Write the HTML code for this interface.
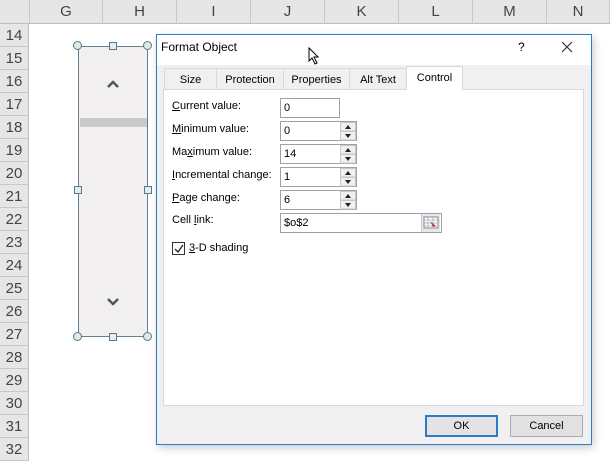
<!DOCTYPE html>
<html><head><style>
*{margin:0;padding:0;box-sizing:border-box}
body{width:610px;height:457px;overflow:hidden;background:#fff;font-family:"Liberation Sans",sans-serif;position:relative}
.a{position:absolute}
.ch{top:0;height:24px;background:#e6e6e6;border-right:1px solid #c8c8c8;border-bottom:1px solid #bdbdbd;font-size:15px;color:#444;text-align:center;line-height:24px}
.rh{left:0;width:29px;height:23px;background:#e6e6e6;border-bottom:1px solid #c8c8c8;border-right:1px solid #bdbdbd;font-size:15px;color:#444;text-align:center;line-height:23px}
.lbl{font-size:11px;color:#000;left:172px}
.in{left:280px;height:20px;border:1px solid #a0a0a0;background:#fff;font-size:11px;padding:3px 3px;line-height:12px}
.sp{width:16px;height:20px;left:340px;border-left:1px solid #ccc;background:#f0f0f0}
.tab{top:68px;height:22px;font-size:11px;line-height:22px;text-align:center;background:#f0f0f0;border:1px solid #d9d9d9;border-bottom:none}
.h{width:9px;height:9px;border:1px solid #5a7a8a;background:#dfe8ea;border-radius:50%}
.s{width:8px;height:8px;border:1px solid #5a7a8a;background:#dfeff5}
</style></head><body>
<div class="a ch" style="left:0;width:30px;background:#e6e6e6"></div>
<div class="a ch" style="left:30px;width:73px">G</div>
<div class="a ch" style="left:103px;width:74px">H</div>
<div class="a ch" style="left:177px;width:74px">I</div>
<div class="a ch" style="left:251px;width:74px">J</div>
<div class="a ch" style="left:325px;width:74px">K</div>
<div class="a ch" style="left:399px;width:74px">L</div>
<div class="a ch" style="left:473px;width:74px">M</div>
<div class="a ch" style="left:547px;width:63px">N</div>
<div class="a rh" style="top:24px">14</div><div class="a rh" style="top:47px">15</div><div class="a rh" style="top:70px">16</div><div class="a rh" style="top:93px">17</div><div class="a rh" style="top:116px">18</div><div class="a rh" style="top:139px">19</div><div class="a rh" style="top:162px">20</div><div class="a rh" style="top:185px">21</div><div class="a rh" style="top:208px">22</div><div class="a rh" style="top:231px">23</div><div class="a rh" style="top:254px">24</div><div class="a rh" style="top:277px">25</div><div class="a rh" style="top:300px">26</div><div class="a rh" style="top:323px">27</div><div class="a rh" style="top:346px">28</div><div class="a rh" style="top:369px">29</div><div class="a rh" style="top:392px">30</div><div class="a rh" style="top:415px">31</div><div class="a rh" style="top:438px">32</div>

<div class="a" style="left:78px;top:46px;width:70px;height:291px;border:1px solid #6a7f8c;background:#f1efef"></div>
<div class="a" style="left:80px;top:118px;width:67px;height:9px;background:#c9c9c9"></div>
<svg class="a" style="left:106px;top:79px" width="14" height="10"><path d="M2 8 L7 3 L12 8" stroke="#555" stroke-width="2.5" fill="none"/></svg>
<svg class="a" style="left:106px;top:297px" width="14" height="10"><path d="M2 2 L7 7 L12 2" stroke="#555" stroke-width="2.5" fill="none"/></svg>
<div class="a h" style="left:73px;top:41px"></div><div class="a s" style="left:109px;top:42px"></div><div class="a h" style="left:143px;top:41px"></div>
<div class="a s" style="left:74px;top:186px"></div><div class="a s" style="left:144px;top:186px"></div>
<div class="a h" style="left:73px;top:332px"></div><div class="a s" style="left:109px;top:333px"></div><div class="a h" style="left:143px;top:332px"></div>

<div class="a" style="left:156px;top:34px;width:436px;height:411px;border:1px solid #2b7bc8;background:#f0f0f0;box-shadow:2px 3px 8px rgba(0,0,0,.2)"></div>
<div class="a" style="left:157px;top:35px;width:434px;height:30px;background:#fff"></div>
<div class="a" style="left:161px;top:40px;font-size:12px">Format Object</div>
<div class="a" style="left:518px;top:40px;font-size:12px">?</div>
<svg class="a" style="left:561px;top:41px" width="12" height="12"><path d="M1 1L11 11M11 1L1 11" stroke="#333" stroke-width="1.2"/></svg>
<svg class="a" style="left:308px;top:47px" width="12" height="18"><path d="M1 1 L1 14 L4 11 L7 17 L9 16 L6 10 L10 10 Z" fill="#fff" stroke="#000" stroke-width="1"/></svg>

<div class="a tab" style="left:164px;width:53px">Size</div>
<div class="a tab" style="left:216px;width:68px">Protection</div>
<div class="a tab" style="left:283px;width:67px">Properties</div>
<div class="a tab" style="left:349px;width:58px">Alt Text</div>
<div class="a tab" style="left:406px;top:66px;height:24px;width:57px;background:#fff;z-index:2">Control</div>
<div class="a" style="left:163px;top:89px;width:421px;height:317px;background:#fff;border:1px solid #d9d9d9"></div>

<div class="a lbl" style="top:100px"><u>C</u>urrent value:</div>
<div class="a lbl" style="top:123px"><u>M</u>inimum value:</div>
<div class="a lbl" style="top:146px">Ma<u>x</u>imum value:</div>
<div class="a lbl" style="top:169px"><u>I</u>ncremental change:</div>
<div class="a lbl" style="top:192px"><u>P</u>age change:</div>
<div class="a lbl" style="top:214px">Cell <u>l</u>ink:</div>

<div class="a in" style="top:98px;width:60px">0</div>
<div class="a in" style="top:121px;width:77px">0</div>
<div class="a in" style="top:144px;width:77px">14</div>
<div class="a in" style="top:167px;width:77px">1</div>
<div class="a in" style="top:190px;width:77px">6</div>
<svg class="a" style="left:340px;top:122px" width="16" height="90">
<g fill="#f0f0f0" stroke="#c8c8c8"><rect x=".5" y=".5" width="15" height="8.5"/><rect x=".5" y="9.5" width="15" height="8.5"/>
<rect x=".5" y="23.5" width="15" height="8.5"/><rect x=".5" y="32.5" width="15" height="8.5"/>
<rect x=".5" y="46.5" width="15" height="8.5"/><rect x=".5" y="55.5" width="15" height="8.5"/>
<rect x=".5" y="69.5" width="15" height="8.5"/><rect x=".5" y="78.5" width="15" height="8.5"/></g>
<g fill="#222"><path d="M5 7L8 3L11 7Z"/><path d="M5 12L8 16L11 12Z"/><path d="M5 30L8 26L11 30Z"/><path d="M5 35L8 39L11 35Z"/><path d="M5 53L8 49L11 53Z"/><path d="M5 58L8 62L11 58Z"/><path d="M5 76L8 72L11 76Z"/><path d="M5 81L8 85L11 81Z"/></g></svg>
<div class="a in" style="top:213px;width:162px">$o$2</div>
<div class="a" style="left:421px;top:214px;width:19px;height:18px;background:#e8e8e8;border-left:1px solid #ccc"></div>
<svg class="a" style="left:423px;top:216px" width="16" height="14"><rect x="1" y="1" width="14" height="11" fill="#fff" stroke="#7a8a9a"/><path d="M1 4H15M1 7H15M1 10H15M5 1V12M10 1V12" stroke="#9ab" stroke-width=".7"/><path d="M7 5L13 10L10 11Z" fill="#c33"/></svg>

<div class="a" style="left:172px;top:242px;width:13px;height:13px;border:1px solid #333;background:#fff"></div>
<svg class="a" style="left:173px;top:243px" width="12" height="12"><path d="M2 6L5 9L10 2" stroke="#222" stroke-width="1.3" fill="none"/></svg>
<div class="a" style="left:189px;top:242px;font-size:11px"><u>3</u>-D shading</div>

<div class="a" style="left:425px;top:415px;width:73px;height:22px;border:2px solid #2b7bc8;background:#e3e3e3;font-size:11px;text-align:center;line-height:18px">OK</div>
<div class="a" style="left:510px;top:415px;width:73px;height:22px;border:1px solid #adadad;background:#e1e1e1;font-size:11px;text-align:center;line-height:20px">Cancel</div>
</body></html>
